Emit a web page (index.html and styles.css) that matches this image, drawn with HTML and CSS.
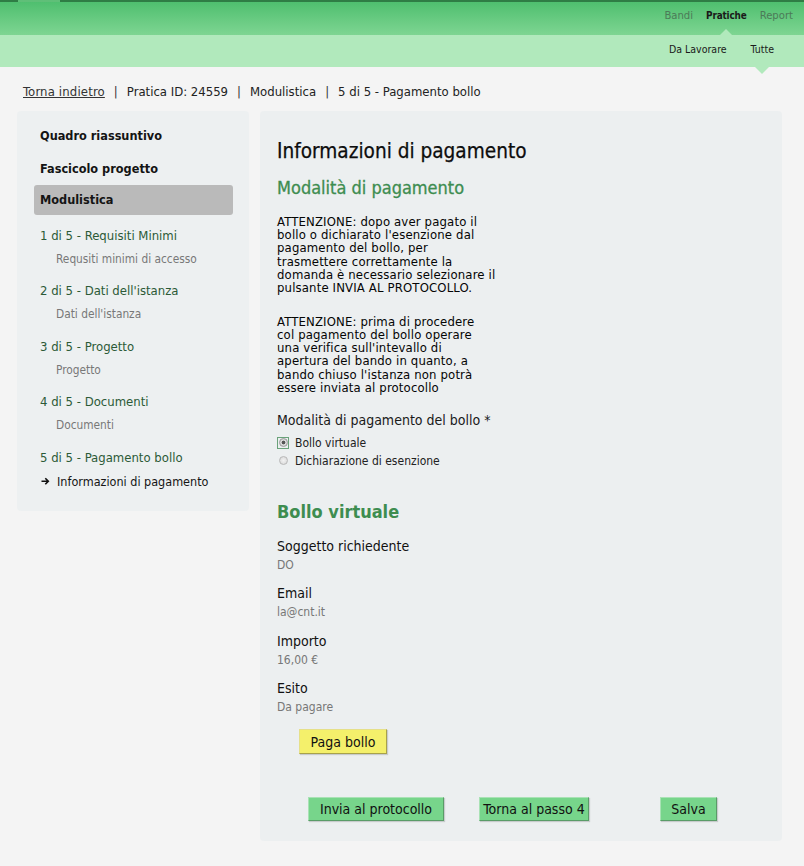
FILE: index.html
```html
<!DOCTYPE html>
<html lang="it">
<head>
<meta charset="utf-8">
<title>Informazioni di pagamento</title>
<link rel="stylesheet" href="styles.css">
</head>
<body>
<header class="header">
  <div class="topbar">
    <span class="toptab"></span>
    <nav class="mainnav">
      <a class="mainnav-item">Bandi</a>
      <a class="mainnav-item is-active">Pratiche</a>
      <a class="mainnav-item">Report</a>
    </nav>
  </div>
  <div class="subbar">
    <nav class="subnav">
      <a class="subnav-item">Da Lavorare</a>
      <a class="subnav-item is-active">Tutte</a>
    </nav>
  </div>
</header>

<div class="breadcrumb">
  <a class="crumb-link">Torna indietro</a><span class="sep">|</span><span>Pratica ID: 24559</span><span class="sep">|</span><span>Modulistica</span><span class="sep sep-wide">|</span><span>5 di 5 - Pagamento bollo</span>
</div>

<div class="layout">
  <aside class="sidebar">
    <div class="side-top">Quadro riassuntivo</div>
    <div class="side-top">Fascicolo progetto</div>
    <div class="side-top side-selected">Modulistica</div>
    <div class="step">
      <div class="step-title">1 di 5 - Requisiti Minimi</div>
      <div class="step-sub">Requsiti minimi di accesso</div>
    </div>
    <div class="step">
      <div class="step-title">2 di 5 - Dati dell'istanza</div>
      <div class="step-sub">Dati dell'istanza</div>
    </div>
    <div class="step">
      <div class="step-title">3 di 5 - Progetto</div>
      <div class="step-sub">Progetto</div>
    </div>
    <div class="step">
      <div class="step-title">4 di 5 - Documenti</div>
      <div class="step-sub">Documenti</div>
    </div>
    <div class="step">
      <div class="step-title">5 di 5 - Pagamento bollo</div>
      <div class="step-current">
        <svg class="arrow" width="9" height="8" viewBox="0 0 9 8"><path d="M0.5 4.2H7M4.3 1.2L7.3 4.2L4.3 7.2" fill="none" stroke="#111" stroke-width="1.6"/></svg>
        <span>Informazioni di pagamento</span>
      </div>
    </div>
  </aside>

  <main class="main">
    <h1 class="title">Informazioni di pagamento</h1>
    <h2 class="section">Modalità di pagamento</h2>
    <p class="notice">ATTENZIONE: dopo aver pagato il<br>bollo o dichiarato l'esenzione dal<br>pagamento del bollo, per<br>trasmettere correttamente la<br>domanda è necessario selezionare il<br>pulsante INVIA AL PROTOCOLLO.</p>
    <p class="notice notice-second">ATTENZIONE: prima di procedere<br>col pagamento del bollo operare<br>una verifica sull'intevallo di<br>apertura del bando in quanto, a<br>bando chiuso l'istanza non potrà<br>essere inviata al protocollo</p>

    <div class="field-label">Modalità di pagamento del bollo *</div>
    <div class="radio-row radio-first">
      <span class="radio-focus"><span class="radio radio-checked"></span></span>
      <span>Bollo virtuale</span>
    </div>
    <div class="radio-row">
      <span class="radio-plain"><span class="radio"></span></span>
      <span>Dichiarazione di esenzione</span>
    </div>

    <h2 class="section section-bollo">Bollo virtuale</h2>
    <div class="info info-first">
      <div class="info-label">Soggetto richiedente</div>
      <div class="info-value">DO</div>
    </div>
    <div class="info">
      <div class="info-label">Email</div>
      <div class="info-value">la@cnt.it</div>
    </div>
    <div class="info">
      <div class="info-label">Importo</div>
      <div class="info-value">16,00 €</div>
    </div>
    <div class="info">
      <div class="info-label">Esito</div>
      <div class="info-value">Da pagare</div>
    </div>

    <button class="btn btn-yellow">Paga bollo</button>

    <div class="actions">
      <button class="btn btn-green btn-send">Invia al protocollo</button>
      <button class="btn btn-green btn-back">Torna al passo 4</button>
      <button class="btn btn-green btn-save">Salva</button>
    </div>
  </main>
</div>
</body>
</html>
```

FILE: styles.css
```css
* { box-sizing: border-box; }

body {
  margin: 0;
  background: #f4f4f4;
  font-family: "DejaVu Sans Condensed", "DejaVu Sans", sans-serif;
  color: #111;
  width: 804px;
  min-height: 866px;
}

a { color: inherit; text-decoration: none; }

.topbar {
  position: relative;
  height: 35px;
  background: linear-gradient(#4fbf6f, #7ed592);
  border-top: 2px solid #2f7d45;
  display: flex;
  justify-content: flex-end;
}

.toptab {
  position: absolute;
  left: 18px;
  top: -2px;
  width: 42px;
  height: 2px;
  background: #5fbf78;
}

.mainnav {
  display: flex;
  gap: 13px;
  padding: 7px 11px 0 0;
  font-size: 11.2px;
  line-height: 14px;
}

.mainnav-item {
  color: #4c7a58;
  position: relative;
}

.mainnav-item.is-active {
  color: #1a1a1a;
  font-weight: bold;
  font-size: 9.9px;
  letter-spacing: -0.15px;
}

.mainnav-item.is-active::after {
  content: "";
  position: absolute;
  left: 50%;
  margin-left: -6px;
  top: 20px;
  border: 6px solid transparent;
  border-top: 0;
  border-bottom-color: #b1e9bc;
}

.subbar {
  height: 32px;
  background: #b1e9bc;
  display: flex;
  justify-content: flex-end;
}

.subnav {
  display: flex;
  gap: 24px;
  padding: 8px 30px 0 0;
  font-size: 10.5px;
}

.subnav-item { position: relative; color: #1a1a1a; }

.subnav-item.is-active::after {
  content: "";
  position: absolute;
  left: 50%;
  margin-left: -7px;
  top: 24px;
  border: 7px solid transparent;
  border-bottom: 0;
  border-top-color: #b1e9bc;
}

.breadcrumb {
  padding: 16px 0 0 23px;
  height: 44px;
  font-size: 13px;
  line-height: 17px;
  color: #222;
}

.crumb-link {
  text-decoration: underline;
  color: #333;
  letter-spacing: 0.15px;
}

.sep { margin: 0 9px; color: #333; }
.sep-wide { margin-left: 9px; }

.layout {
  display: flex;
  gap: 11px;
  padding: 0 22px 0 17px;
  align-items: flex-start;
}

.sidebar {
  width: 232px;
  background: #edf0f1;
  border-radius: 4px;
  padding: 8px 16px 18px 17px;
}

.side-top {
  height: 33px;
  line-height: 33px;
  padding-left: 6px;
  font-weight: bold;
  font-size: 12.6px;
  color: #141414;
}

.side-selected {
  height: 30px;
  line-height: 30px;
  background: #bababa;
  border-radius: 3px;
}

.step { margin-top: 8.5px; padding-left: 6px; }

.step-title {
  height: 24px;
  line-height: 24px;
  font-size: 13px;
  color: #2c5a37;
}

.step-sub {
  height: 23px;
  line-height: 23px;
  padding-left: 16px;
  font-size: 11.8px;
  color: #787878;
}

.step-current {
  height: 23px;
  display: flex;
  align-items: center;
  gap: 7px;
  padding-left: 1px;
  font-size: 12.5px;
  color: #151515;
}

.main {
  flex: 1;
  background: #eceff0;
  border-radius: 4px;
  padding: 28px 17px 20px 17px;
  min-height: 730px;
}

.title {
  margin: 0;
  font-size: 20.6px;
  line-height: 24px;
  font-weight: normal;
  color: #0d0d0d;
  -webkit-text-stroke: 0.25px #0d0d0d;
}

.section {
  margin: 14px 0 0;
  font-size: 18px;
  line-height: 22px;
  font-weight: normal;
  color: #3e8d50;
  -webkit-text-stroke: 0.3px #3e8d50;
}

.notice {
  margin: 16px 0 0;
  white-space: nowrap;
  font-size: 13px;
  letter-spacing: 0.15px;
  line-height: 13.2px;
  color: #050505;
}

.notice-second { margin-top: 20.5px; }

.field-label {
  margin-top: 17px;
  font-size: 14px;
  line-height: 18px;
  color: #1a1a1a;
}

.radio-row {
  display: flex;
  align-items: center;
  gap: 6px;
  height: 18px;
  font-size: 12px;
  color: #222;
}

.radio-first { margin-top: 5px; }

.radio-focus,
.radio-plain {
  width: 12px;
  height: 12px;
  display: flex;
  align-items: center;
  justify-content: center;
}

.radio-focus { border: 1px solid #6aa27a; }

.radio {
  width: 9px;
  height: 9px;
  border-radius: 50%;
  border: 1px solid #b8b8b8;
  background: radial-gradient(circle, #f2f2f2, #d6d6d6);
}

.radio-checked {
  background: radial-gradient(circle, #555 0 1.6px, #dcdcdc 2.2px, #c8c8c8);
  border-color: #9a9a9a;
}

.section-bollo {
  margin-top: 31px;
  font-weight: bold;
  -webkit-text-stroke: 0;
}

.info { margin-top: 10.5px; }
.info-first { margin-top: 14px; }

.info-label {
  font-size: 14px;
  line-height: 19px;
  color: #111;
}

.info-value {
  font-size: 12px;
  line-height: 18px;
  color: #777;
}

.btn {
  font-family: inherit;
  font-size: 14px;
  color: #111;
  height: 25px;
  padding: 0;
  white-space: nowrap;
  box-shadow: 1px 1px 1px rgba(0,0,0,0.15);
  cursor: pointer;
}

.btn-yellow {
  display: block;
  margin: 13px 0 0 22px;
  width: 88px;
  background: #f4f06b;
  border: 1px solid;
  border-color: #e6e08a #a8a24a #a8a24a #e6e08a;
}

.btn-green {
  height: 24px;
  background: #77d58b;
  border: 1px solid;
  border-color: #a9e2b5 #5a9c68 #5a9c68 #a9e2b5;
}

.actions {
  display: flex;
  margin-top: 43px;
  padding-left: 31px;
}

.btn-send { width: 136px; }
.btn-back { width: 110px; margin-left: 35px; }
.btn-save { width: 57px; margin-left: 71px; }
```
